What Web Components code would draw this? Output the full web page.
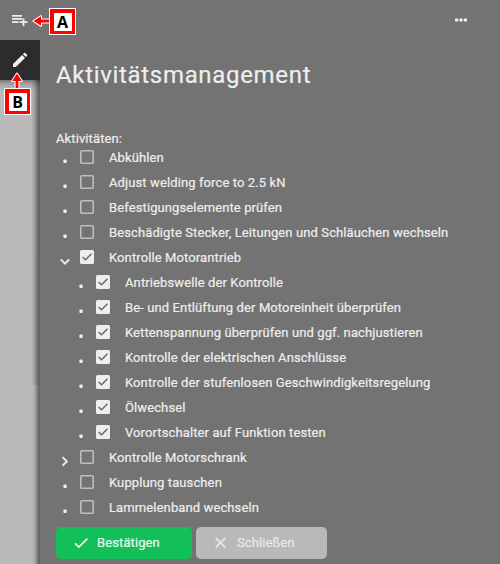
<!DOCTYPE html>
<html lang="de">
<head>
<meta charset="utf-8">
<title>Aktivitätsmanagement</title>
<style>
html,body{margin:0;height:100%;overflow:hidden}
body{font-family:Roboto,"Liberation Sans",sans-serif;color:#eee;background:#737373}
</style>
</head>
<body>
<activity-app></activity-app>
<script>
const define=(name,html,setup)=>customElements.define(name,class extends HTMLElement{
  connectedCallback(){
    if(this.shadowRoot)return;
    const root=this.attachShadow({mode:'open'});
    const t=document.createElement('template');
    t.innerHTML=html;
    root.append(t.content.cloneNode(true));
    if(setup)setup(this,root);
  }
});

define('top-bar',`<style>
:host{display:flex;justify-content:space-between;align-items:center;height:40px;padding:0 32px 0 12px;box-sizing:border-box}
svg{display:block}
</style>
<svg width="16" height="16" viewBox="0 0 16 16" fill="#eee"><path d="M0 3h10v1.7H0zM0 6.1h10v1.7H0zM0 9.2h6.5v1.7H0zM10.6 6.2H12.4v3h3V11h-3v3h-1.8v-3h-3V9.2h3z"/></svg>
<svg width="13" height="4" viewBox="0 0 13 4" fill="#f4f4f4"><rect x="0" y=".5" width="3.2" height="3" rx=".9"/><rect x="4.4" y=".5" width="3.2" height="3" rx=".9"/><rect x="8.8" y=".5" width="3.2" height="3" rx=".9"/></svg>`);

define('side-rail',`<style>
:host{display:flex;flex-direction:column;width:40px;flex:none}
.tab{height:40px;flex:none;background:#2c2c2c;display:flex;align-items:center;justify-content:center}
.rest{flex:1;display:flex;justify-content:flex-end;background:linear-gradient(90deg,transparent 32px,#0000000f 34px,#0003 36px,#00000063 38px,#00000080 40px),linear-gradient(#777,#9b9b9b 3px,#b5b5b5 8px,#bababa 12px)}
.scroll{width:8px;height:305px;background:linear-gradient(90deg,#00000008,#0000001a 50%,transparent);border-radius:0 0 3px 3px}
</style>
<div class="tab"><svg width="16" height="16" viewBox="0 0 16 16" fill="#f2f2f2"><path d="M1 12.1 10.1 3 13 5.9 3.9 15H1zM10.9 2.2l1.2-1.2q.6-.6 1.2 0l1.7 1.7q.6.6 0 1.2l-1.2 1.2z"/></svg></div>
<div class="rest"><div class="scroll"></div></div>`);

define('check-box',`<style>
:host{display:block;width:14px;height:14px;flex:none}
svg{display:block}
.tick{display:none}
:host([checked]) .tick{display:block}
:host([checked]) .box{fill:#eee;stroke:#eee}
</style><svg width="14" height="14" viewBox="0 0 14 14" fill="none"><rect class="box" x=".8" y=".8" width="12.4" height="12.4" rx=".8" stroke="#bdbdbd" stroke-width="1.6"/><path class="tick" stroke="#666" stroke-width="1.4" d="M2.6 7 5.5 9.8 11.5 3.8"/></svg>`);

define('activity-row',`<style>
:host{display:flex;align-items:flex-start;height:25px;box-sizing:border-box}
:host([child]){padding-left:16px}
.mark{width:24px;height:25px;flex:none}
.mark svg{display:block}
check-box{margin-top:5px}
.label{margin-left:15px;font-size:13px;line-height:25px;letter-spacing:var(--track);white-space:nowrap}
</style>
<span class="mark"></span><check-box></check-box><span class="label"><slot></slot></span>`,(host,root)=>{
  const shapes={
    open:'<path d="m4.8 14.4 4.2 4.2 4.2-4.2" fill="none" stroke="#eee" stroke-width="1.9"/>',
    closed:'<path d="m6.6 12.2 4.2 4.2-4.2 4.2" fill="none" stroke="#eee" stroke-width="1.9"/>',
    dot:'<rect x="7.4" y="14.6" width="3.3" height="3.3" rx="1" fill="#eee"/>'
  };
  root.querySelector('.mark').innerHTML='<svg width="24" height="25">'+shapes[host.getAttribute('mark')||'dot']+'</svg>';
  if(host.hasAttribute('checked'))root.querySelector('check-box').setAttribute('checked','');
});

define('action-button',`<style>
:host{display:flex;align-items:center;height:32px;box-sizing:border-box;border-radius:5px;font-size:13px;letter-spacing:var(--track);color:#eef7f0;background:#12bf59;width:136px;padding:0 0 2px 17px}
:host([muted]){background:#b9b9b9;color:#eaeaea;width:131px}
svg{display:block;width:16px;height:16px;margin-right:8px}
</style><svg viewBox="0 0 16 16" fill="none" stroke="currentColor" stroke-width="1.7"><path/></svg><slot></slot>`,(host,root)=>{
  root.querySelector('path').setAttribute('d',host.hasAttribute('muted')?'M2.7 3.9 12.3 13.5M12.3 3.9 2.7 13.5':'M2 9.4 5.8 13.1 14.3 4.7');
});

define('callout-label',`<style>
:host{position:absolute;display:flex;width:27px;height:27px;box-sizing:border-box;border:1px solid #fff;background:#f00;padding:3.5px}
span{flex:1;background:#fff;color:#000;font:bold 16px/18px "Open Sans","Noto Sans",sans-serif;text-align:center}
</style><span><slot></slot></span>`);

define('callout-arrow',`<style>
:host{position:absolute;display:block}
svg{display:block}
:host([up]) svg{transform:rotate(90deg)}
</style><svg width="18" height="12" viewBox="0 0 18 12"><path d="M1.5 6 9 1.2V4.6h9v2.8H9v3.4z" fill="#f00" stroke="#fff" stroke-width="2" paint-order="stroke" stroke-linejoin="round"/></svg>`);

define('activity-panel',`<style>
:host{display:block;flex:1;padding:17px 0 0 16px}
h1{margin:0;font-weight:400;font-size:24px;line-height:36px;letter-spacing:var(--title-track)}
.caption{font-size:13px;line-height:16px;letter-spacing:var(--track);margin-top:38px;height:14px}
.actions{display:flex;gap:4px;margin-top:7px}
</style>
<h1>Aktivitätsmanagement</h1>
<div class="caption">Aktivitäten:</div>
<activity-row>Abkühlen</activity-row>
<activity-row>Adjust welding force to 2.5 kN</activity-row>
<activity-row>Befestigungselemente prüfen</activity-row>
<activity-row>Beschädigte Stecker, Leitungen und Schläuchen wechseln</activity-row>
<activity-row mark="open" checked>Kontrolle Motorantrieb</activity-row>
<activity-row child checked>Antriebswelle der Kontrolle</activity-row>
<activity-row child checked>Be- und Entlüftung der Motoreinheit überprüfen</activity-row>
<activity-row child checked>Kettenspannung überprüfen und ggf. nachjustieren</activity-row>
<activity-row child checked>Kontrolle der elektrischen Anschlüsse</activity-row>
<activity-row child checked>Kontrolle der stufenlosen Geschwindigkeitsregelung</activity-row>
<activity-row child checked>Ölwechsel</activity-row>
<activity-row child checked>Vorortschalter auf Funktion testen</activity-row>
<activity-row mark="closed">Kontrolle Motorschrank</activity-row>
<activity-row>Kupplung tauschen</activity-row>
<activity-row>Lammelenband wechseln</activity-row>
<div class="actions"><action-button>Bestätigen</action-button><action-button muted>Schließen</action-button></div>`);

define('activity-app',`<style>
:host{display:flex;flex-direction:column;position:relative;width:500px;height:564px;overflow:hidden;--track:.11px;--title-track:.68px;-webkit-text-stroke:.2px}
callout-label{-webkit-text-stroke:0}
main{display:flex;flex:1;min-height:0}
.a{left:49px;top:8px}.b{left:4px;top:88px}
.to-a{left:32px;top:15px}.to-b{left:8px;top:75px}
</style>
<top-bar></top-bar>
<main><side-rail></side-rail><activity-panel></activity-panel></main>
<callout-arrow class="to-a"></callout-arrow><callout-label class="a">A</callout-label>
<callout-arrow class="to-b" up></callout-arrow><callout-label class="b">B</callout-label>`);
</script>
</body>
</html>
